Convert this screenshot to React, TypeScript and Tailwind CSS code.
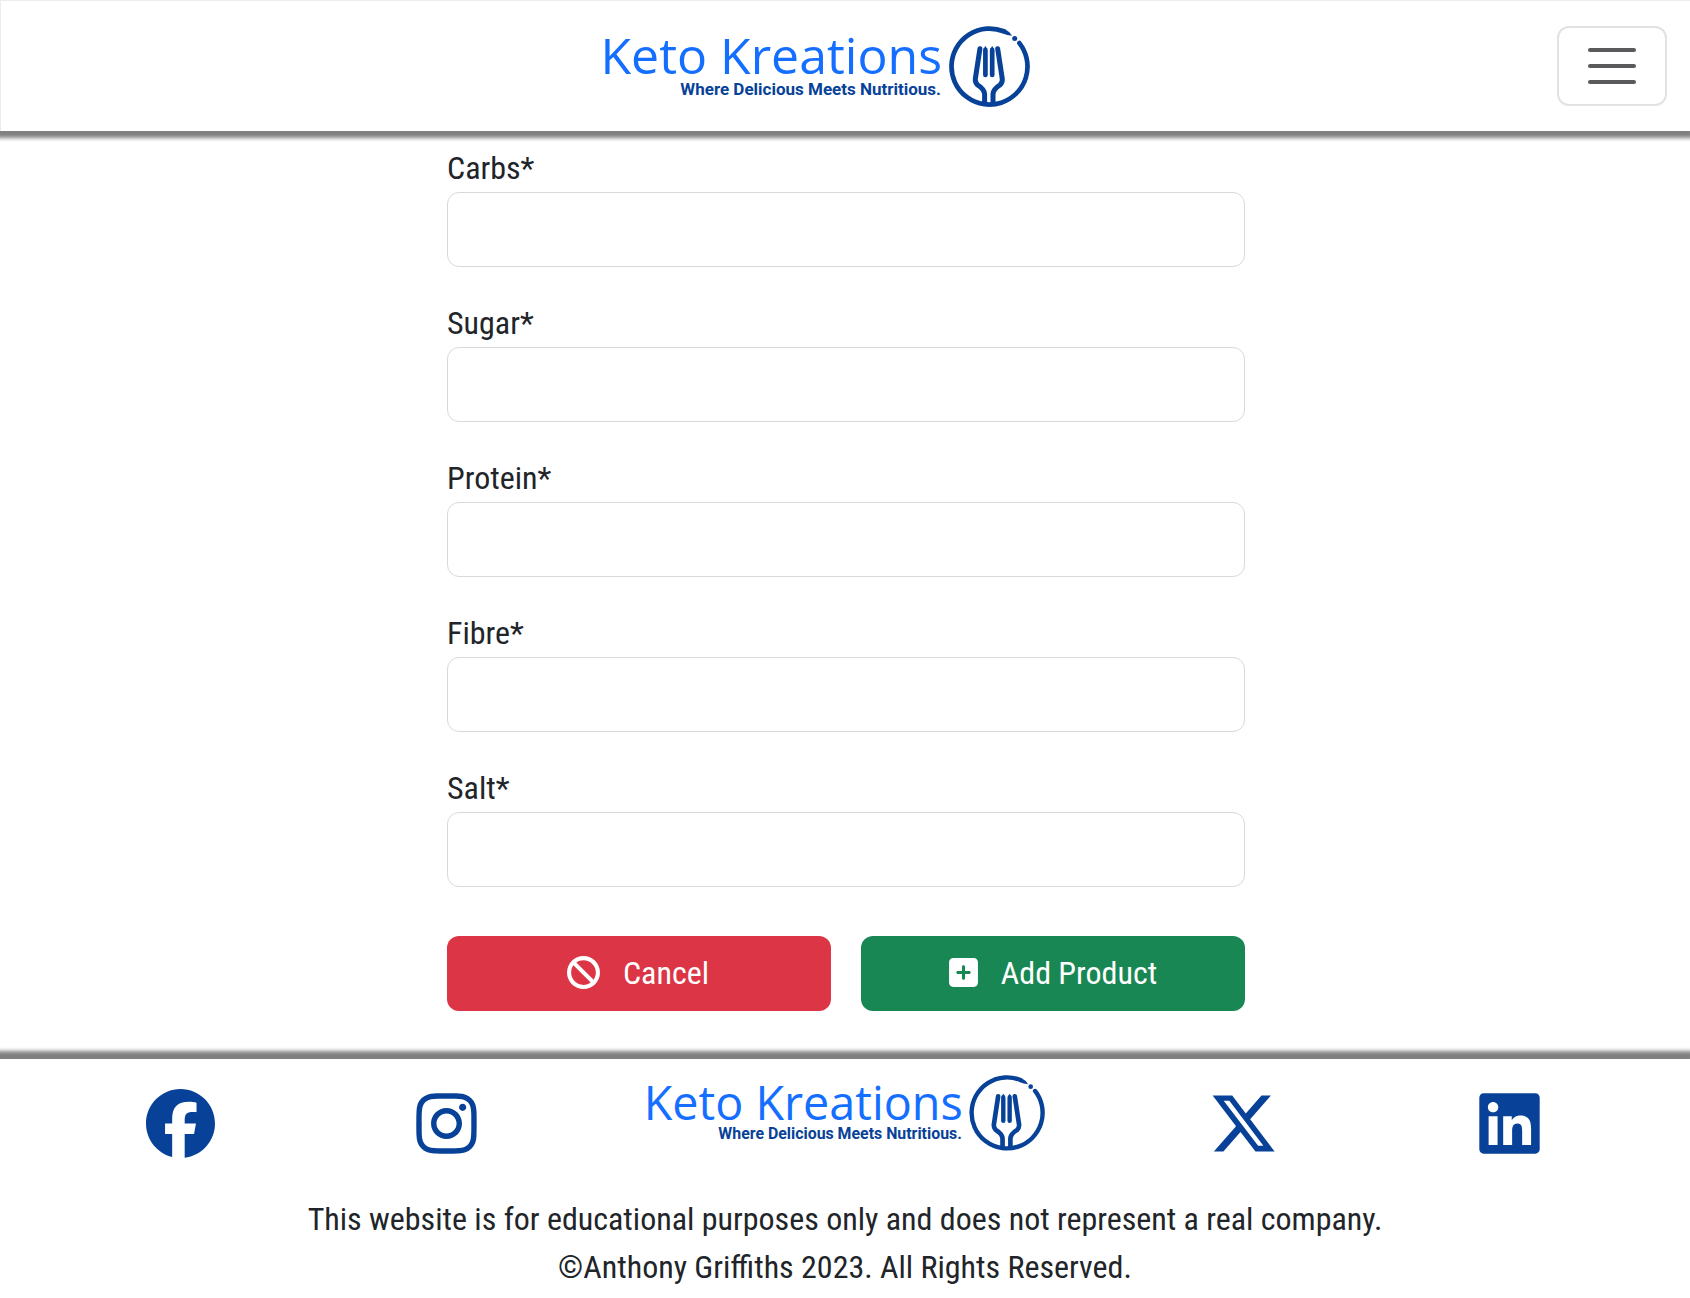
import { FaBan, FaFacebook, FaInstagram, FaLinkedin, FaSquarePlus, FaXTwitter } from "react-icons/fa6";

const fields = ["Carbs", "Sugar", "Protein", "Fibre", "Salt"];

function Logo({ className }: { className: string }) {
  return (
    <svg viewBox="0 0 428 81" className={className} role="img" aria-label="Keto Kreations">
      <text x="340" y="48" textAnchor="end" fontSize="50" fill="#146eff" className="font-['Open_Sans',sans-serif]">
        Keto Kreations
      </text>
      <text x="339" y="69" textAnchor="end" fontSize="17" fontWeight="700" fill="#084298" className="font-['Roboto',sans-serif]">
        Where Delicious Meets Nutritious.
      </text>
      <g fill="none" stroke="#084298" strokeWidth="4.7" strokeLinecap="round" strokeLinejoin="round">
        <path d="M417.4 17.1A38 38 0 1 1 401.7 5.3" />
        <path d="M377.9 22.8L373.3 53Q373 56.5 375.5 58.8Q382.3 63 382.6 68V77" strokeWidth="5" />
        <path d="M395.7 22.8L400.3 53Q400.6 56.5 398.1 58.8Q391.3 63 391 68V77" strokeWidth="5" />
        <path d="M383.4 24V49M390.2 24V49" />
      </g>
      <g fill="#084298">
        <path d="M402.6 3.1Q407.5 5.4 410 9.8Q405 9.4 400.9 7.4Z" />
        <path d="M383.4 20L385.4 23H381.4ZM390.2 20L392.2 23H388.2Z" />
        <circle cx="412.7" cy="12.5" r="2.5" />
      </g>
    </svg>
  );
}

export default function App() {
  return (
    <div className="bg-white font-['Roboto_Condensed','Roboto',sans-serif] text-[32px] leading-[48px] text-[#212529]">
      <header className="relative flex h-[131px] items-center border-t border-l border-[#ececec] bg-white pr-[23px] pl-[73px] shadow-[0_3px_4px_4px_gray]">
        <a href="#home" className="flex flex-1 justify-center">
          <Logo className="w-[428px] overflow-visible" />
        </a>
        <button type="button" aria-label="Toggle navigation" className="flex h-20 w-[110px] items-center justify-center rounded-xl border-2 border-[#e2e2e2]">
          <svg viewBox="0 0 30 30" className="h-[60px] w-[60px]" fill="none" stroke="#5a5a5c" strokeWidth="2" strokeLinecap="round">
            <path d="M4 7h22M4 15h22M4 23h22" />
          </svg>
        </button>
      </header>

      <main className="pt-[13px] pr-6 pb-12 pl-[26px]">
        <form className="mx-auto max-w-[798px]">
          {fields.map((name) => (
            <div key={name} className="mb-8">
              <label htmlFor={name} className="block">{name}*</label>
              <input id={name} type="text" className="block h-[75px] w-full rounded-xl border border-[#d6dade] px-6" />
            </div>
          ))}
          <div className="mt-[49px] grid grid-cols-2 gap-[30px]">
            <button type="button" className="flex h-[75px] items-center justify-center gap-[23px] rounded-xl bg-[#dc3545] pr-[2px] pb-[2px] text-white">
              <FaBan className="h-[33px] w-[33px]" />
              Cancel
            </button>
            <button type="submit" className="flex h-[75px] items-center justify-center gap-[23px] rounded-xl bg-[#198754] pb-[2px] text-white">
              <FaSquarePlus className="h-[33px] w-[29px]" />
              Add Product
            </button>
          </div>
        </form>
      </main>

      <footer className="relative bg-white px-12 pt-4 pb-[7px] text-center shadow-[0_-4px_4px_4px_gray]">
        <div className="grid h-[120px] grid-cols-12 text-[69px] text-[#084298]">
          <a href="#facebook" aria-label="Facebook" className="col-span-2 flex justify-center pt-[14px]"><FaFacebook /></a>
          <a href="#instagram" aria-label="Instagram" className="col-span-2 flex justify-center pt-[14px]"><FaInstagram /></a>
          <a href="#home" className="col-span-4 flex items-start justify-center"><Logo className="w-[400px] overflow-visible" /></a>
          <a href="#x" aria-label="X" className="col-span-2 flex justify-center pt-[14px]"><FaXTwitter /></a>
          <a href="#linkedin" aria-label="LinkedIn" className="col-span-2 flex justify-center pt-[14px]"><FaLinkedin /></a>
        </div>
        <p>This website is for educational purposes only and does not represent a real company.</p>
        <p>©Anthony Griffiths 2023. All Rights Reserved.</p>
      </footer>
    </div>
  );
}
